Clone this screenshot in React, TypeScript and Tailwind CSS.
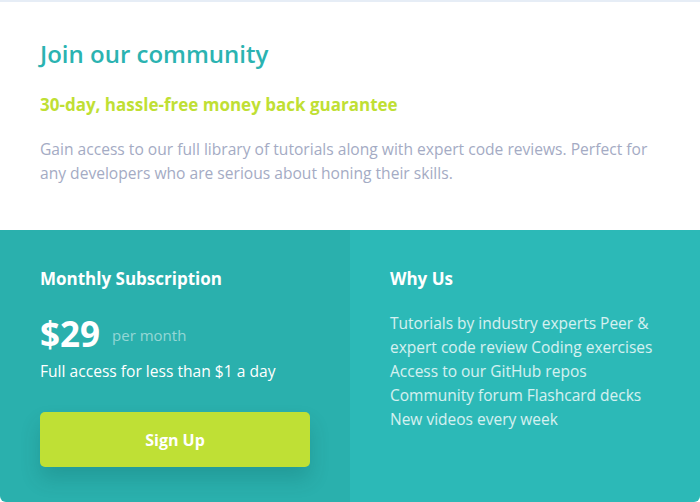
export default function App() {
  const perks = [
    "Tutorials by industry experts Peer &",
    "expert code review Coding exercises",
    "Access to our GitHub repos",
    "Community forum Flashcard decks",
    "New videos every week",
  ];

  return (
    <div className="h-[502px] w-[700px] bg-white pt-[2px] shadow-[inset_0_2px_0_#e6edf6] font-['Open_Sans',sans-serif]">
      <div className="flex h-[500px] flex-col overflow-hidden rounded-[6px] bg-white">
        <section className="h-[228px] px-10 pt-[37px]">
          <h1 className="text-[24px] font-semibold leading-[30px] text-[#2bb3b1]">Join our community</h1>
          <h2 className="mt-[24px] text-[17px] font-bold leading-[24px] text-[#c0df34]">
            30-day, hassle-free money back guarantee
          </h2>
          <p className="mt-[20px] text-[15.6px] leading-[24px] text-[#a4abc4]">
            Gain access to our full library of tutorials along with expert code reviews. Perfect for
            <br />
            any developers who are serious about honing their skills.
          </p>
        </section>

        <div className="grid flex-1 grid-cols-2">
          <section className="bg-[#2ab0ad] px-10 pt-[37px]">
            <h3 className="text-[17px] font-bold leading-[24px] text-white">Monthly Subscription</h3>
            <div className="mt-[23px] flex items-center gap-[12px]">
              <span className="text-[35px] font-bold leading-[40px] text-white">$29</span>
              <span className="mt-[2px] text-[15px] text-white/50">per month</span>
            </div>
            <p className="mt-[5px] text-[15.6px] leading-[24px] text-white">Full access for less than $1 a day</p>
            <button className="mt-[29px] h-[55px] w-[270px] rounded-[5px] bg-[#bfe035] text-[16px] font-bold text-white shadow-[0_12px_20px_rgba(0,60,60,0.18)]">
              Sign Up
            </button>
          </section>

          <section className="bg-[#2cb9b7] px-10 pt-[37px]">
            <h3 className="text-[17px] font-bold leading-[24px] text-white">Why Us</h3>
            <ul className="mt-[20px] text-[15.5px] leading-[24px] text-white/80">
              {perks.map((p) => (
                <li key={p}>{p}</li>
              ))}
            </ul>
          </section>
        </div>
      </div>
    </div>
  );
}
